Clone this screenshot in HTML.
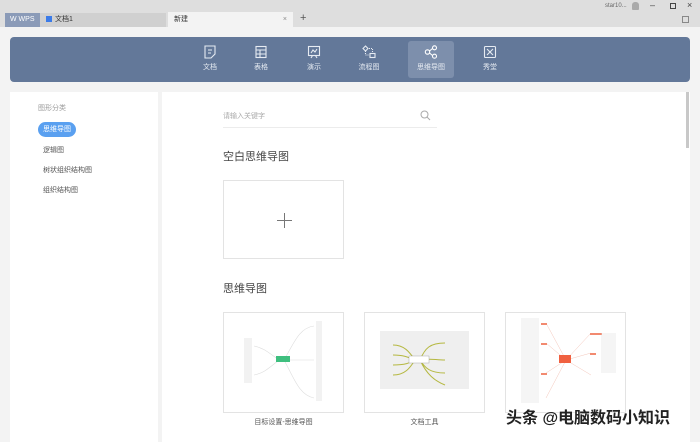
<!DOCTYPE html>
<html><head><meta charset="utf-8"><style>
*{margin:0;padding:0;box-sizing:border-box}
body{width:700px;height:442px;overflow:hidden;background:#f3f3f3;font-family:"Liberation Sans","Noto Sans CJK SC",sans-serif;position:relative;color:#333}
.abs{position:absolute}
.top{left:0;top:0;width:700px;height:27px;background:#dedede}
.t{font-size:7px}
.nav{left:10px;top:37px;width:680px;height:45px;background:#637899;border-radius:4px}
.item{position:absolute;top:0;width:46px;height:45px;text-align:center;color:#e6ebf2;font-size:7px}
.item svg{display:block;margin:8px auto 3px}
.card{position:absolute;background:#fff;border:1px solid #e3e3e3}
</style></head><body>
<div class="abs top"></div>
<div class="abs" style="left:5px;top:13px;width:35px;height:14px;background:#8b9bb8;color:#fff;font-size:7px;line-height:14px;padding-left:5px">W WPS</div>
<div class="abs" style="left:40px;top:13px;width:126px;height:14px;background:#d0d0d0;font-size:7px;line-height:14px;padding-left:6px"><span style="display:inline-block;width:6px;height:6px;background:#3b7be8;margin-right:3px;vertical-align:-1px"></span>文档1</div>
<div class="abs" style="left:168px;top:12px;width:125px;height:15px;background:#f3f3f3;font-size:7px;line-height:15px;padding-left:6px">新建<span style="position:absolute;right:6px;color:#888">×</span></div>
<div class="abs" style="left:300px;top:12px;font-size:11px;color:#555">+</div>
<div class="abs t" style="left:605px;top:3px;color:#666;font-size:6px">star10...</div>
<div class="abs" style="left:632px;top:2px;width:7px;height:8px;background:#aaa;border-radius:3px 3px 1px 1px"></div>
<div class="abs" style="left:650px;top:0;font-size:9px;color:#444">–</div>
<div class="abs" style="left:670px;top:3px;width:6px;height:6px;border:1px solid #444"></div>
<div class="abs" style="left:687px;top:0;font-size:9px;color:#444">×</div>
<div class="abs" style="left:682px;top:16px;width:7px;height:7px;border:1px solid #888"></div>
<div class="abs nav">
<div class="item" style="left:177px"><svg width="14" height="14" viewBox="0 0 14 14" fill="none" stroke="#e6ebf2" stroke-width="1.1"><path d="M2 1h10v8l-4 4H2z M5 5h4 M5 8h3"/></svg>文档</div>
<div class="item" style="left:228px"><svg width="14" height="14" viewBox="0 0 14 14" fill="none" stroke="#e6ebf2" stroke-width="1.1"><rect x="2" y="1.5" width="10" height="11"/><path d="M2 5h10M2 9h10M6 5v7.5"/></svg>表格</div>
<div class="item" style="left:281px"><svg width="14" height="14" viewBox="0 0 14 14" fill="none" stroke="#e6ebf2" stroke-width="1.1"><rect x="1.5" y="1.5" width="11" height="9"/><path d="M4 8l2-3 2 2 2-3M4 13l1.5-2.5M10 13l-1.5-2.5"/></svg>演示</div>
<div class="item" style="left:336px"><svg width="14" height="14" viewBox="0 0 14 14" fill="none" stroke="#e6ebf2" stroke-width="1.1"><path d="M3.5 1l2.5 2.5-2.5 2.5L1 3.5z"/><rect x="8" y="8.5" width="5" height="4"/><path d="M3.5 6v4h4M7 3.5h3.5v5" stroke-dasharray="1 1"/></svg>流程图</div>
<div class="item" style="left:398px;background:#7d8fac;border-radius:3px;top:4px;height:37px"><svg width="14" height="14" viewBox="0 0 14 14" fill="none" stroke="#fff" stroke-width="1.1" style="margin-top:4px"><circle cx="3.5" cy="7" r="2.2"/><circle cx="10.5" cy="2.8" r="2"/><circle cx="10.5" cy="11.2" r="2"/><path d="M5.5 6l3-2.5M5.5 8l3 2.5"/></svg>思维导图</div>
<div class="item" style="left:457px"><svg width="14" height="14" viewBox="0 0 14 14" fill="none" stroke="#e6ebf2" stroke-width="1.1"><rect x="1.5" y="1.5" width="11" height="11" rx="1"/><path d="M4 4l6 6M10 4l-6 6"/></svg>秀堂</div>
</div>
<div class="abs" style="left:10px;top:92px;width:148px;height:350px;background:#fff"></div>
<div class="abs" style="left:38px;top:103px;font-size:7px;color:#999">图形分类</div>
<div class="abs" style="left:38px;top:122px;width:38px;height:15px;background:#5aa0f0;border-radius:8px;color:#fff;font-size:7px;line-height:15px;text-align:center">思维导图</div>
<div class="abs" style="left:43px;top:145px;font-size:7px;color:#555">逻辑图</div>
<div class="abs" style="left:43px;top:165px;font-size:7px;color:#555">树状组织结构图</div>
<div class="abs" style="left:43px;top:185px;font-size:7px;color:#555">组织结构图</div>
<div class="abs" style="left:162px;top:92px;width:528px;height:350px;background:#fff"></div>
<div class="abs" style="left:686px;top:92px;width:3px;height:56px;background:#c8c8c8"></div>
<div class="abs" style="left:223px;top:111px;font-size:7px;color:#aaa">请输入关键字</div>
<svg class="abs" style="left:420px;top:110px" width="11" height="11" viewBox="0 0 11 11" fill="none" stroke="#aaa" stroke-width="1"><circle cx="4.5" cy="4.5" r="3.5"/><path d="M7 7l3 3"/></svg>
<div class="abs" style="left:223px;top:127px;width:214px;height:1px;background:#ececec"></div>
<div class="abs" style="left:223px;top:148px;font-size:11px;color:#444">空白思维导图</div>
<div class="card" style="left:223px;top:180px;width:121px;height:79px"><div style="position:absolute;left:53px;top:39px;width:15px;height:1px;background:#777"></div><div style="position:absolute;left:60px;top:32px;width:1px;height:15px;background:#777"></div></div>
<div class="abs" style="left:223px;top:280px;font-size:11px;color:#444">思维导图</div>
<div class="card" style="left:223px;top:312px;width:121px;height:101px">
<svg width="119" height="99" viewBox="0 0 119 99" fill="none" stroke="#ddd" stroke-width=".6"><path d="M60 47C70 30 75 15 90 13M60 47H90M60 47C70 65 75 82 90 85M55 47C45 40 40 35 30 33M55 47C45 55 40 60 30 62"/><rect x="52" y="43" width="14" height="6" fill="#3fbf7f" stroke="none"/><g fill="#ccc" stroke="none"><rect x="92" y="8" width="6" height="80" opacity=".25"/><rect x="20" y="25" width="8" height="45" opacity=".25"/></g></svg></div>
<div class="abs" style="left:223px;top:417px;width:121px;text-align:center;font-size:7px;color:#555">目标设置-思维导图</div>
<div class="card" style="left:364px;top:312px;width:121px;height:101px">
<svg width="119" height="99" viewBox="0 0 119 99"><rect x="15" y="18" width="89" height="58" fill="#efefef"/><g fill="none" stroke="#b5b840" stroke-width="1"><path d="M55 47C60 35 65 30 80 30M55 47C65 45 70 47 80 47M55 47C60 55 65 60 80 60M55 47C62 62 70 68 80 72M50 47C45 40 40 32 28 32M50 47C45 45 40 42 28 42M50 47C45 50 40 52 28 52M50 47C45 55 40 62 28 62"/></g><rect x="44" y="43" width="20" height="7" fill="#fff" stroke="#999" stroke-width=".4"/></svg></div>
<div class="abs" style="left:364px;top:417px;width:121px;text-align:center;font-size:7px;color:#555">文档工具</div>
<div class="card" style="left:505px;top:312px;width:121px;height:101px">
<svg width="119" height="99" viewBox="0 0 119 99" fill="none" stroke="#f0b8a8" stroke-width=".4"><path d="M60 47L40 10M60 47L40 30M60 47L40 60M60 47L40 85M60 47L85 20M60 47L85 40M60 47L85 62"/><rect x="53" y="42" width="12" height="8" fill="#f06040" stroke="none"/><g fill="#f28a70" stroke="none"><rect x="35" y="10" width="6" height="2"/><rect x="35" y="30" width="6" height="2"/><rect x="35" y="60" width="6" height="2"/><rect x="84" y="20" width="12" height="2"/><rect x="84" y="40" width="6" height="2"/></g><g fill="#ddd" stroke="none"><rect x="15" y="5" width="18" height="85" opacity=".3"/><rect x="95" y="20" width="15" height="40" opacity=".3"/></g></svg></div>
<div class="abs" style="left:506px;top:404px;font-size:16px;color:#222;font-weight:bold;text-shadow:0 0 2px #fff,0 0 2px #fff">头条 @电脑数码小知识</div>
</body></html>
